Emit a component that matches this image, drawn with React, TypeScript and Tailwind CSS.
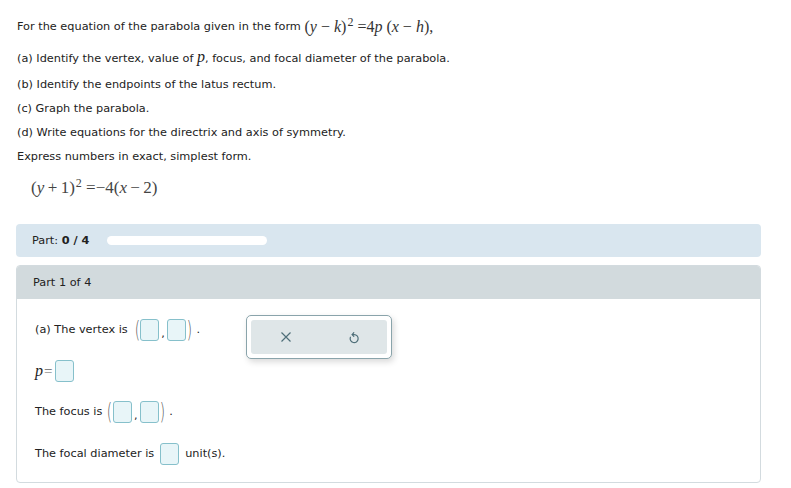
import React from "react";

const Box = () => (
  <span className="inline-block w-[19px] h-[22px] rounded-[3px] border border-[#86c0cb] bg-[#e8f5f8] align-middle" />
);

const Paren = ({ c }: { c: string }) => (
  <span className="inline-block font-['DejaVu_Sans',sans-serif] font-extralight text-[17px] leading-[22px] text-[#555] scale-y-[1.4] scale-x-[0.8]">{c}</span>
);

const Pair = () => (
  <span className="inline-flex items-center">
    <Paren c="(" />
    <Box />
    <span className="mx-[2px] mt-[8px]">,</span>
    <Box />
    <Paren c=")" />
    <span className="ml-[4px]">.</span>
  </span>
);

const I = ({ children }: { children: React.ReactNode }) => <i className="font-['Liberation_Serif',serif]">{children}</i>;
const Sup = ({ children }: { children: React.ReactNode }) => (
  <span className="inline-block text-[12px] leading-[12px] relative top-[-6px] ml-[1px]">{children}</span>
);

export default function App() {
  return (
    <div className="w-[791px] h-[488px] bg-white text-[#222] font-['DejaVu_Sans',sans-serif] text-[11.3px] overflow-hidden">
      <div className="pl-[17px] pt-[17px]">
        <div className="h-[20px] flex items-center whitespace-nowrap">
          <span>For the equation of the parabola given in the form&nbsp;</span>
          <span className="font-['Liberation_Serif',serif] text-[16px] text-[#333]">
            (<I>y</I> − <I>k</I>)<Sup>2</Sup> =4<I>p</I> (<I>x</I> − <I>h</I>),
          </span>
        </div>
        <div className="mt-[12px] h-[16px] leading-[16px] whitespace-nowrap">
          (a) Identify the vertex, value of <span className="font-['Liberation_Serif',serif] italic text-[16px]">p</span>, focus, and focal diameter of the parabola.
        </div>
        <div className="mt-[12px] h-[16px] leading-[16px]">(b) Identify the endpoints of the latus rectum.</div>
        <div className="mt-[8px] h-[16px] leading-[16px]">(c) Graph the parabola.</div>
        <div className="mt-[8px] h-[16px] leading-[16px]">(d) Write equations for the directrix and axis of symmetry.</div>
        <div className="mt-[8px] h-[16px] leading-[16px]">Express numbers in exact, simplest form.</div>
        <div className="mt-[13px] h-[20px] flex items-center pl-[14px] font-['Liberation_Serif',serif] text-[17px] text-[#444] whitespace-nowrap">
          <span>
            (<I>y</I>{"\u2009"}+{"\u2009"}1)<Sup>2</Sup>&nbsp;=−4(<I>x</I>{"\u2009"}−{"\u2009"}2)
          </span>
        </div>
      </div>

      <div className="ml-[16px] mt-[26px] w-[745px] h-[33px] rounded-[4px] bg-[#d9e6ef] flex items-center pl-[16px] pt-[2px]">
        <span>
          Part: <b>0 / 4</b>
        </span>
        <span className="ml-[18px] mt-[-2px] w-[160px] h-[9px] rounded-full bg-white" />
      </div>

      <div className="relative ml-[16px] mt-[8px] w-[745px] h-[218px] rounded-[4px] border border-[#d3dbdf]">
        <div className="h-[33px] bg-[#d2dadd] rounded-t-[3px] flex items-center pl-[16px] pt-[1px]">Part 1 of 4</div>
        <div className="pl-[18px] pt-[20px] flex flex-col">
          <div className="h-[22px] flex items-center">
            <span className="mr-[6px]">(a) The vertex is</span>
            <Pair />
          </div>
          <div className="mt-[19px] h-[22px] flex items-center">
            <span className="font-['Liberation_Serif',serif] italic text-[16px]">p</span>
            <span className="font-['Liberation_Serif',serif] text-[15px] text-[#666] ml-[1px] mr-[3px]">=</span>
            <Box />
          </div>
          <div className="mt-[19px] h-[22px] flex items-center">
            <span className="mr-[4px]">The focus is</span>
            <Pair />
          </div>
          <div className="mt-[20px] h-[22px] flex items-center">
            <span className="mr-[6px]">The focal diameter is</span>
            <Box />
            <span className="ml-[6px]">unit(s).</span>
          </div>
        </div>

        <div className="absolute left-[229px] top-[49px] w-[146px] h-[44px] rounded-[5px] border border-[#8aa4ab] bg-white p-[4px] shadow-[2px_3px_6px_rgba(0,0,0,0.15)]">
          <div className="w-full h-full rounded-[3px] bg-[#dfe6e8] flex items-center">
            <span className="w-[68px] flex justify-center pl-[1px]">
              <svg width="12" height="12" viewBox="0 0 12 12">
                <path d="M1.5 1.5 L10.5 10.5 M10.5 1.5 L1.5 10.5" stroke="#4f6f79" strokeWidth="1.2" fill="none" />
              </svg>
            </span>
            <span className="w-[68px] flex justify-center pl-[2px]">
              <svg width="12" height="14" viewBox="0 0 12 14">
                <path d="M2.4 7.2 A4 4 0 1 0 6.2 4.6 L4.2 4.6" stroke="#4f6f79" strokeWidth="1.2" fill="none" strokeLinecap="round" strokeLinejoin="round" />
                <path d="M5.8 2.6 L4.2 4.6 L5.8 6.4" stroke="#4f6f79" strokeWidth="1.2" fill="none" strokeLinecap="round" strokeLinejoin="round" />
              </svg>
            </span>
          </div>
        </div>
      </div>
    </div>
  );
}
